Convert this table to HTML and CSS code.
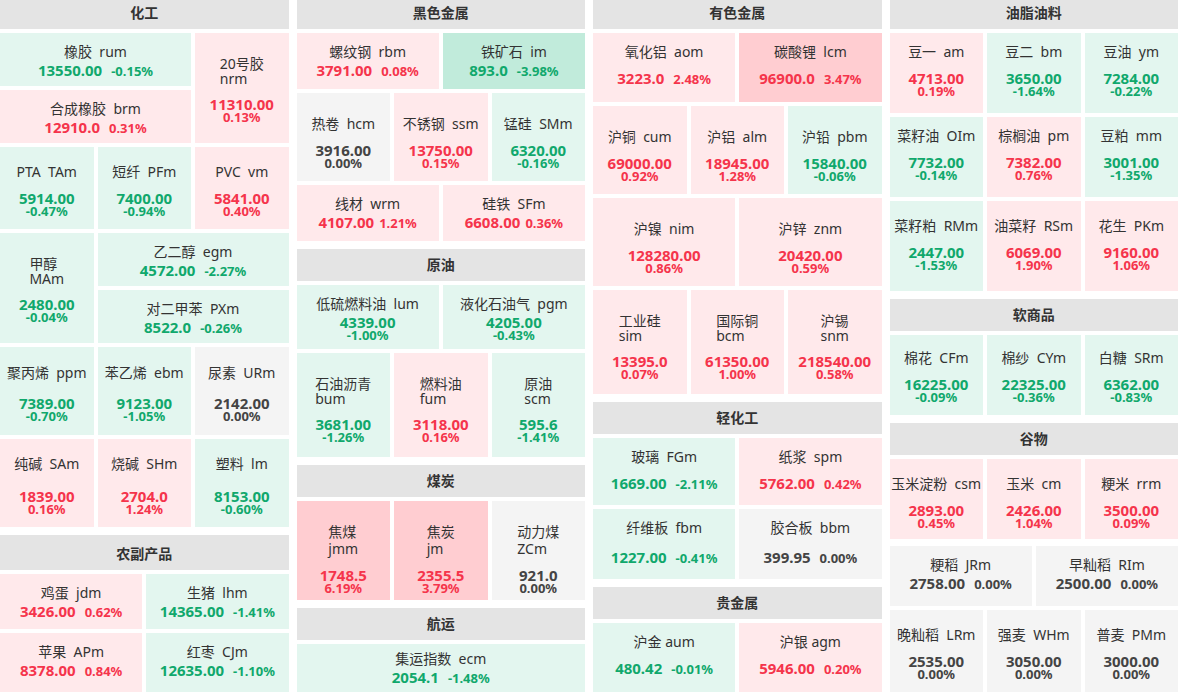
FILE: index.html
```html
<!DOCTYPE html>
<html lang="zh">
<head>
<meta charset="utf-8">
<title>期货行情</title>
<link rel="stylesheet" href="styles.css">
</head>
<body>
<div class="board">

<div class="col">
  <section class="sec">
    <div class="hd">化工</div>
    <div class="row blk">
      <div class="c dn ca1"><div class="nm">橡胶  rum</div><div class="v in"><b>13550.00</b><i>-0.15%</i></div></div>
      <div class="c up ca2 t23 m10"><div class="nm l2">20号胶<br>nrm</div><div class="v"><b>11310.00</b><i>0.13%</i></div></div>
      <div class="c up ca3"><div class="nm">合成橡胶  brm</div><div class="v in"><b>12910.0</b><i>0.31%</i></div></div>
    </div>
    <div class="row r3 h82 t16 m11">
      <div class="c dn"><div class="nm">PTA  TAm</div><div class="v"><b>5914.00</b><i>-0.47%</i></div></div>
      <div class="c dn"><div class="nm">短纤  PFm</div><div class="v"><b>7400.00</b><i>-0.94%</i></div></div>
      <div class="c up"><div class="nm">PVC  vm</div><div class="v"><b>5841.00</b><i>0.40%</i></div></div>
    </div>
    <div class="row blk">
      <div class="c dn cc1 t23 m10"><div class="nm l2">甲醇<br>MAm</div><div class="v"><b>2480.00</b><i>-0.04%</i></div></div>
      <div class="c dn cc2"><div class="nm">乙二醇  egm</div><div class="v in"><b>4572.00</b><i>-2.27%</i></div></div>
      <div class="c dn cc3"><div class="nm">对二甲苯  PXm</div><div class="v in"><b>8522.0</b><i>-0.26%</i></div></div>
    </div>
    <div class="row r3 h88 t18 m16">
      <div class="c dn"><div class="nm">聚丙烯  ppm</div><div class="v"><b>7389.00</b><i>-0.70%</i></div></div>
      <div class="c dn"><div class="nm">苯乙烯  ebm</div><div class="v"><b>9123.00</b><i>-1.05%</i></div></div>
      <div class="c flat"><div class="nm">尿素  URm</div><div class="v"><b>2142.00</b><i>0.00%</i></div></div>
    </div>
    <div class="row r3 h88 t16 m17">
      <div class="c up"><div class="nm">纯碱  SAm</div><div class="v"><b>1839.00</b><i>0.16%</i></div></div>
      <div class="c up"><div class="nm">烧碱  SHm</div><div class="v"><b>2704.0</b><i>1.24%</i></div></div>
      <div class="c dn"><div class="nm">塑料  lm</div><div class="v"><b>8153.00</b><i>-0.60%</i></div></div>
    </div>
  </section>
  <section class="sec">
    <div class="hd hd35">农副产品</div>
    <div class="row r2 h55">
      <div class="c up"><div class="nm">鸡蛋  jdm</div><div class="v in"><b>3426.00</b><i>0.62%</i></div></div>
      <div class="c dn"><div class="nm">生猪  lhm</div><div class="v in"><b>14365.00</b><i>-1.41%</i></div></div>
    </div>
    <div class="row r2 h60">
      <div class="c up"><div class="nm">苹果  APm</div><div class="v in"><b>8378.00</b><i>0.84%</i></div></div>
      <div class="c dn"><div class="nm">红枣  CJm</div><div class="v in"><b>12635.00</b><i>-1.10%</i></div></div>
    </div>
  </section>
</div>

<div class="col">
  <section class="sec">
    <div class="hd">黑色金属</div>
    <div class="row r2 h56">
      <div class="c up"><div class="nm">螺纹钢  rbm</div><div class="v in"><b>3791.00</b><i>0.08%</i></div></div>
      <div class="c dn2"><div class="nm">铁矿石  im</div><div class="v in"><b>893.0</b><i>-3.98%</i></div></div>
    </div>
    <div class="row r3 h88 t23 m10">
      <div class="c flat"><div class="nm">热卷  hcm</div><div class="v"><b>3916.00</b><i>0.00%</i></div></div>
      <div class="c up"><div class="nm">不锈钢  ssm</div><div class="v"><b>13750.00</b><i>0.15%</i></div></div>
      <div class="c dn"><div class="nm">锰硅  SMm</div><div class="v"><b>6320.00</b><i>-0.16%</i></div></div>
    </div>
    <div class="row r2 h56 t10">
      <div class="c up"><div class="nm">线材  wrm</div><div class="v in tight"><b>4107.00</b><i>1.21%</i></div></div>
      <div class="c up"><div class="nm">硅铁  SFm</div><div class="v in tight"><b>6608.00</b><i>0.36%</i></div></div>
    </div>
  </section>
  <section class="sec">
    <div class="hd">原油</div>
    <div class="row r2 h64">
      <div class="c dn"><div class="nm">低硫燃料油  lum</div><div class="v"><b>4339.00</b><i>-1.00%</i></div></div>
      <div class="c dn"><div class="nm">液化石油气  pgm</div><div class="v"><b>4205.00</b><i>-0.43%</i></div></div>
    </div>
    <div class="row r3 h104 t23 m10">
      <div class="c dn"><div class="nm l2">石油沥青<br>bum</div><div class="v"><b>3681.00</b><i>-1.26%</i></div></div>
      <div class="c up"><div class="nm l2">燃料油<br>fum</div><div class="v"><b>3118.00</b><i>0.16%</i></div></div>
      <div class="c dn"><div class="nm l2">原油<br>scm</div><div class="v"><b>595.6</b><i>-1.41%</i></div></div>
    </div>
  </section>
  <section class="sec">
    <div class="hd">煤炭</div>
    <div class="row r3 h99 t23 m11">
      <div class="c up2"><div class="nm l2 lx">焦煤<br>jmm</div><div class="v"><b>1748.5</b><i>6.19%</i></div></div>
      <div class="c up2"><div class="nm l2 lx">焦炭<br>jm</div><div class="v"><b>2355.5</b><i>3.79%</i></div></div>
      <div class="c flat"><div class="nm l2 lx">动力煤<br>ZCm</div><div class="v"><b>921.0</b><i>0.00%</i></div></div>
    </div>
  </section>
  <section class="sec">
    <div class="hd">航运</div>
    <div class="row r1 h50 t7">
      <div class="c dn"><div class="nm">集运指数  ecm</div><div class="v in"><b>2054.1</b><i>-1.48%</i></div></div>
    </div>
  </section>
</div>

<div class="col">
  <section class="sec">
    <div class="hd">有色金属</div>
    <div class="row r2 h69 m10">
      <div class="c up"><div class="nm">氧化铝  aom</div><div class="v in"><b>3223.0</b><i>2.48%</i></div></div>
      <div class="c up2"><div class="nm">碳酸锂  lcm</div><div class="v in"><b>96900.0</b><i>3.47%</i></div></div>
    </div>
    <div class="row r3 h88 t23 m10">
      <div class="c up"><div class="nm">沪铜  cum</div><div class="v"><b>69000.00</b><i>0.92%</i></div></div>
      <div class="c up"><div class="nm">沪铝  alm</div><div class="v"><b>18945.00</b><i>1.28%</i></div></div>
      <div class="c dn"><div class="nm">沪铅  pbm</div><div class="v"><b>15840.00</b><i>-0.06%</i></div></div>
    </div>
    <div class="row r2 h88 t23 m10">
      <div class="c up"><div class="nm">沪镍  nim</div><div class="v"><b>128280.00</b><i>0.86%</i></div></div>
      <div class="c up"><div class="nm">沪锌  znm</div><div class="v"><b>20420.00</b><i>0.59%</i></div></div>
    </div>
    <div class="row r3 h104 t23 m10">
      <div class="c up"><div class="nm l2">工业硅<br>sim</div><div class="v"><b>13395.0</b><i>0.07%</i></div></div>
      <div class="c up"><div class="nm l2">国际铜<br>bcm</div><div class="v"><b>61350.00</b><i>1.00%</i></div></div>
      <div class="c up"><div class="nm l2">沪锡<br>snm</div><div class="v"><b>218540.00</b><i>0.58%</i></div></div>
    </div>
  </section>
  <section class="sec">
    <div class="hd">轻化工</div>
    <div class="row r2 h67 m10">
      <div class="c dn"><div class="nm">玻璃  FGm</div><div class="v in"><b>1669.00</b><i>-2.11%</i></div></div>
      <div class="c up"><div class="nm">纸浆  spm</div><div class="v in"><b>5762.00</b><i>0.42%</i></div></div>
    </div>
    <div class="row r2 h70 m14">
      <div class="c dn"><div class="nm">纤维板  fbm</div><div class="v in"><b>1227.00</b><i>-0.41%</i></div></div>
      <div class="c flat"><div class="nm">胶合板  bbm</div><div class="v in"><b>399.95</b><i>0.00%</i></div></div>
    </div>
  </section>
  <section class="sec">
    <div class="hd">贵金属</div>
    <div class="row r2 h70 m10">
      <div class="c dn"><div class="nm">沪金 aum</div><div class="v in"><b>480.42</b><i>-0.01%</i></div></div>
      <div class="c up"><div class="nm">沪银 agm</div><div class="v in"><b>5946.00</b><i>0.20%</i></div></div>
    </div>
  </section>
</div>

<div class="col">
  <section class="sec">
    <div class="hd">油脂油料</div>
    <div class="row r3 h80 m10">
      <div class="c up"><div class="nm">豆一  am</div><div class="v"><b>4713.00</b><i>0.19%</i></div></div>
      <div class="c dn"><div class="nm">豆二  bm</div><div class="v"><b>3650.00</b><i>-1.64%</i></div></div>
      <div class="c dn"><div class="nm">豆油  ym</div><div class="v"><b>7284.00</b><i>-0.22%</i></div></div>
    </div>
    <div class="row r3 h80 m10">
      <div class="c dn"><div class="nm">菜籽油  OIm</div><div class="v"><b>7732.00</b><i>-0.14%</i></div></div>
      <div class="c up"><div class="nm">棕榈油  pm</div><div class="v"><b>7382.00</b><i>0.76%</i></div></div>
      <div class="c dn"><div class="nm">豆粕  mm</div><div class="v"><b>3001.00</b><i>-1.35%</i></div></div>
    </div>
    <div class="row r3 h90 t17 m10">
      <div class="c dn"><div class="nm">菜籽粕  RMm</div><div class="v"><b>2447.00</b><i>-1.53%</i></div></div>
      <div class="c up"><div class="nm">油菜籽  RSm</div><div class="v"><b>6069.00</b><i>1.90%</i></div></div>
      <div class="c up"><div class="nm">花生  PKm</div><div class="v"><b>9160.00</b><i>1.06%</i></div></div>
    </div>
  </section>
  <section class="sec">
    <div class="hd">软商品</div>
    <div class="row r3 h80 t15 m11">
      <div class="c dn"><div class="nm">棉花  CFm</div><div class="v"><b>16225.00</b><i>-0.09%</i></div></div>
      <div class="c dn"><div class="nm">棉纱  CYm</div><div class="v"><b>22325.00</b><i>-0.36%</i></div></div>
      <div class="c dn"><div class="nm">白糖  SRm</div><div class="v"><b>6362.00</b><i>-0.83%</i></div></div>
    </div>
  </section>
  <section class="sec">
    <div class="hd">谷物</div>
    <div class="row r3 h80 t17 m10">
      <div class="c up"><div class="nm">玉米淀粉  csm</div><div class="v"><b>2893.00</b><i>0.45%</i></div></div>
      <div class="c up"><div class="nm">玉米  cm</div><div class="v"><b>2426.00</b><i>1.04%</i></div></div>
      <div class="c up"><div class="nm">粳米  rrm</div><div class="v"><b>3500.00</b><i>0.09%</i></div></div>
    </div>
    <div class="row r2 h60 push">
      <div class="c flat"><div class="nm">粳稻  JRm</div><div class="v in"><b>2758.00</b><i>0.00%</i></div></div>
      <div class="c flat"><div class="nm">早籼稻  RIm</div><div class="v in"><b>2500.00</b><i>0.00%</i></div></div>
    </div>
    <div class="row r3 h82 t17 m10">
      <div class="c flat"><div class="nm">晚籼稻  LRm</div><div class="v"><b>2535.00</b><i>0.00%</i></div></div>
      <div class="c flat"><div class="nm">强麦  WHm</div><div class="v"><b>3050.00</b><i>0.00%</i></div></div>
      <div class="c flat"><div class="nm">普麦  PMm</div><div class="v"><b>3000.00</b><i>0.00%</i></div></div>
    </div>
  </section>
</div>

</div>
</body>
</html>
```
FILE: styles.css
```css
* { box-sizing: border-box; margin: 0; padding: 0; }
html, body { height: 100%; overflow: hidden; background: #fff; }
body {
  font-family: "Noto Sans", "Noto Sans CJK SC", sans-serif;
  color: #333;
}
.board {
  display: grid;
  grid-template-columns: repeat(4, 1fr);
  column-gap: 8px;
  margin-top: -3px;
}
.col { display: flex; flex-direction: column; gap: 8px; min-width: 0; }
.sec { display: flex; flex-direction: column; gap: 4px; }
.hd {
  height: 32px;
  line-height: 32px;
  background: #e4e4e4;
  text-align: center;
  font-weight: 700;
  font-size: 14px;
  color: #333;
}
.hd35 { height: 35px; line-height: 38px; }

.row { display: grid; gap: 4px; --pt: 11px; --mt: 3px; }
.r1 { grid-template-columns: 1fr; }
.r2 { grid-template-columns: 1fr 1fr; }
.r3 { grid-template-columns: 1fr 1fr 1fr; }
.blk { grid-template-columns: 1fr 1fr 1fr; grid-template-rows: 53px 53px; }
.ca1 { grid-column: 1 / 3; grid-row: 1; }
.ca2 { grid-column: 3; grid-row: 1 / 3; }
.ca3 { grid-column: 1 / 3; grid-row: 2; }
.cc1 { grid-column: 1; grid-row: 1 / 3; }
.cc2 { grid-column: 2 / 4; grid-row: 1; }
.cc3 { grid-column: 2 / 4; grid-row: 2; }

.h50 { height: 50px; }
.h55 { height: 55px; }
.h56 { height: 56px; }
.h60 { height: 60px; }
.h64 { height: 64px; }
.h67 { height: 67px; }
.h69 { height: 69px; }
.h70 { height: 70px; }
.h80 { height: 80px; }
.h82 { height: 82px; }
.h88 { height: 88px; }
.h90 { height: 90px; }
.h99 { height: 99px; }
.h104 { height: 104px; }
.push { margin-top: 3px; }

.t7 { --pt: 7px; }
.t10 { --pt: 10.5px; }
.t15 { --pt: 14.7px; }
.t16 { --pt: 16.5px; }
.t17 { --pt: 17px; }
.t18 { --pt: 17.7px; }
.t23 { --pt: 23px; }
.m10 { --mt: 10.6px; }
.m11 { --mt: 11.4px; }
.m13 { --mt: 13.5px; }
.m14 { --mt: 14px; }
.m16 { --mt: 15.6px; }
.m17 { --mt: 17.4px; }

.c {
  display: flex;
  flex-direction: column;
  align-items: center;
  padding-top: var(--pt);
  overflow: hidden;
  white-space: nowrap;
  min-width: 0;
}
.nm { font-size: 14px; line-height: 16px; white-space: pre; color: #333; }
.nm.l2 { line-height: 15px; }
.nm.lx { line-height: 16.5px; }
.v {
  margin-top: var(--mt);
  display: flex;
  flex-direction: column;
  align-items: center;
}
.v b { font-size: 15px; line-height: 14px; font-weight: 700; }
.v i { font-style: normal; font-size: 13px; line-height: 13px; font-weight: 700; }
.v.in { flex-direction: row; align-items: baseline; }
.v.in i { margin-left: 9px; line-height: 14px; }
.v.in.tight i { margin-left: 5px; }

.up { background: #ffe9eb; }
.up2 { background: #ffcdd1; }
.dn { background: #e3f6ef; }
.dn2 { background: #c1ebdb; }
.flat { background: #f4f4f4; }
.up .v, .up2 .v { color: #f5344b; }
.dn .v, .dn2 .v { color: #10a86c; }
.flat .v { color: #444; }
```
